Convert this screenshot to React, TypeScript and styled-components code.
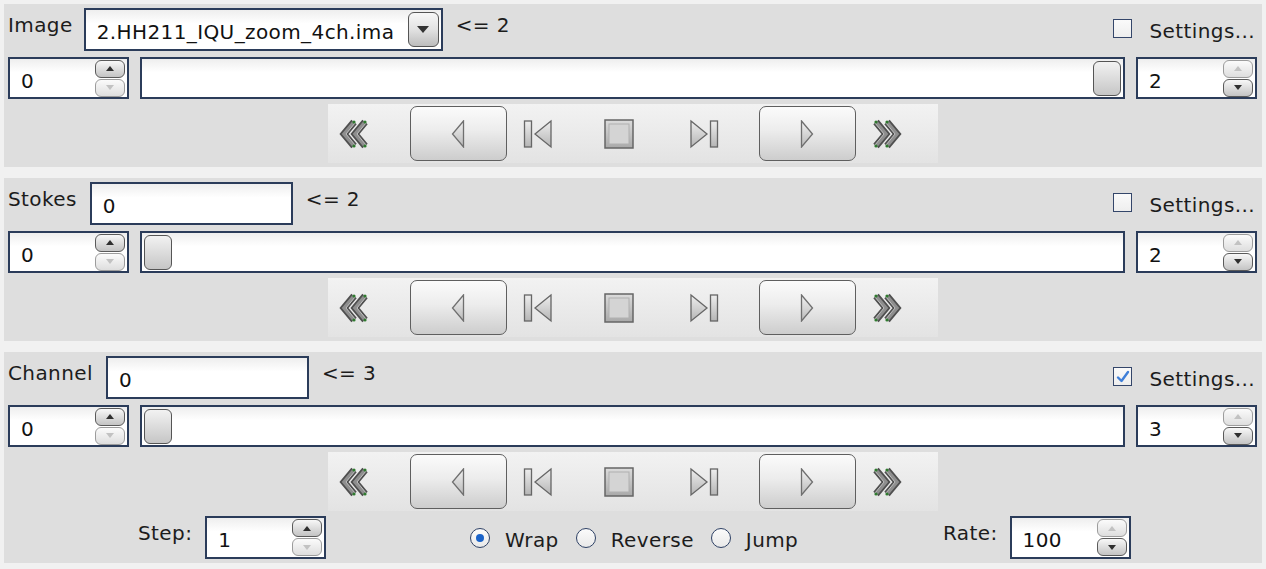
import React from "react";
import styled, { createGlobalStyle } from "styled-components";

const GlobalStyle = createGlobalStyle`
  body {
    margin: 0;
    background: #f1f1f1;
    font-family: "DejaVu Sans", "Liberation Sans", sans-serif;
    color: #1c1c1c;
  }
`;

const Page = styled.div`
  display: flex;
  flex-direction: column;
  gap: 11px;
  padding: 4px;
`;

const Panel = styled.section`
  background: #dedede;
  padding: 4px 5px 4px 4px;
  display: flex;
  flex-direction: column;
`;

const HeaderRow = styled.div`
  display: flex;
  align-items: flex-start;
  height: 43px;
`;

const Label = styled.span<{ $gap?: number }>`
  font-size: 20px;
  line-height: 24px;
  letter-spacing: 0.4px;
  margin-top: 5px;
  margin-right: ${(p) => p.$gap ?? 13}px;
  white-space: nowrap;
`;

const Hint = styled(Label)`
  margin-left: 13px;
`;

const Field = styled.div<{ $w: number; $h?: number }>`
  width: ${(p) => p.$w}px;
  height: ${(p) => p.$h ?? 43}px;
  box-sizing: border-box;
  border: 2px solid #2b3c5a;
  background: linear-gradient(#eeeeee, #ffffff 35%);
  display: flex;
  align-items: center;
  padding: 0 2px 0 11px;
  flex-shrink: 0;
`;

const FieldText = styled.span`
  flex: 1;
  min-width: 0;
  overflow: hidden;
  white-space: nowrap;
  font-size: 20px;
  line-height: 24px;
  letter-spacing: 0.4px;
  padding-top: 5px;
  color: #111;
`;

const ComboArrow = styled.span`
  width: 31px;
  height: 35px;
  box-sizing: border-box;
  margin-left: 4px;
  flex-shrink: 0;
  border: 1.5px solid #555;
  border-radius: 6px;
  background: linear-gradient(#f7f7f7, #e2e2e2 50%, #bdbdbd);
  display: flex;
  align-items: center;
  justify-content: center;
`;

const DownTriangle = styled.span<{ $color?: string; $size?: number }>`
  width: 0;
  height: 0;
  border-left: ${(p) => p.$size ?? 6}px solid transparent;
  border-right: ${(p) => p.$size ?? 6}px solid transparent;
  border-top: ${(p) => (p.$size ?? 6) + 1}px solid ${(p) => p.$color ?? "#333"};
`;

const UpTriangle = styled.span<{ $color?: string }>`
  width: 0;
  height: 0;
  border-left: 4px solid transparent;
  border-right: 4px solid transparent;
  border-bottom: 5px solid ${(p) => p.$color ?? "#333"};
`;

const SpinButtons = styled.div`
  display: flex;
  flex-direction: column;
  gap: 1px;
  margin-left: 4px;
`;

const SpinPill = styled.span<{ $disabled?: boolean }>`
  width: 30px;
  height: 18px;
  box-sizing: border-box;
  border: 1.5px solid ${(p) => (p.$disabled ? "#9c9c9c" : "#5a5a5a")};
  border-radius: 6px;
  background: ${(p) =>
    p.$disabled
      ? "linear-gradient(#fbfbfb, #dedede)"
      : "linear-gradient(#f8f8f8, #d8d8d8 60%, #c4c4c4)"};
  display: flex;
  align-items: center;
  justify-content: center;
`;

const SettingsGroup = styled.div`
  margin-left: auto;
  display: flex;
  align-items: flex-start;
  gap: 17px;
  padding-right: 2px;
`;

const CheckBox = styled.span`
  width: 19px;
  height: 19px;
  box-sizing: border-box;
  margin-top: 11px;
  border: 1.5px solid #34466a;
  background: linear-gradient(#fafafa, #eeeeee);
  display: flex;
  align-items: center;
  justify-content: center;
`;

const SettingsText = styled.span`
  font-size: 20px;
  line-height: 24px;
  letter-spacing: 0.4px;
  margin-top: 11px;
`;

const SliderRow = styled.div`
  display: flex;
  gap: 11px;
  margin-top: 6px;
  height: 42px;
`;

const Track = styled.div<{ $atEnd: boolean }>`
  flex: 1;
  box-sizing: border-box;
  border: 2px solid #2b3c5a;
  background: linear-gradient(#eeeeee, #ffffff 35%);
  display: flex;
  align-items: center;
  justify-content: ${(p) => (p.$atEnd ? "flex-end" : "flex-start")};
  padding: 0 2px;
`;

const Handle = styled.span`
  width: 28px;
  height: 35px;
  box-sizing: border-box;
  border: 1.5px solid #555;
  border-radius: 6px;
  background: linear-gradient(#f2f2f2, #dcdcdc 50%, #c6c6c6);
`;

const Toolbar = styled.div`
  align-self: center;
  width: 610px;
  height: 59px;
  margin-top: 5px;
  background: linear-gradient(#f2f2f2, #ececec 40%, #e3e3e3);
  display: flex;
  align-items: center;
`;

const ToolIcon = styled.span<{ $ml: number }>`
  display: flex;
  margin-left: ${(p) => p.$ml}px;
`;

const BigButton = styled.span<{ $ml: number }>`
  width: 97px;
  height: 55px;
  box-sizing: border-box;
  margin-left: ${(p) => p.$ml}px;
  border: 1.5px solid #5f5f5f;
  border-radius: 7px;
  background: linear-gradient(#fbfbfb, #ececec 45%, #cdcdcd);
  display: flex;
  align-items: center;
  justify-content: center;
`;

const Footer = styled.div`
  display: grid;
  grid-template-columns: 462px 473px 1fr;
  height: 43px;
  margin-top: 5px;
`;

const FooterGroup = styled.div<{ $pl?: number }>`
  display: flex;
  align-items: flex-start;
  padding-left: ${(p) => p.$pl ?? 0}px;
`;

const RadioGroup = styled.div`
  display: flex;
  align-items: center;
  gap: 17px;
  height: 43px;
`;

const RadioItem = styled.label`
  display: flex;
  align-items: center;
  gap: 15px;
`;

const RadioCircle = styled.span<{ $on?: boolean }>`
  width: 20px;
  height: 20px;
  box-sizing: border-box;
  border-radius: 50%;
  border: 1.5px solid #2e4165;
  background: linear-gradient(#fbfbfb, #e9e9e9);
  display: flex;
  align-items: center;
  justify-content: center;
  &::after {
    content: "";
    width: 8px;
    height: 8px;
    border-radius: 50%;
    background: ${(p) => (p.$on ? "#1a63c9" : "transparent")};
  }
`;

const RadioText = styled.span`
  font-size: 20px;
  line-height: 24px;
  letter-spacing: 0.4px;
  padding-top: 4px;
`;

const Chevrons: React.FC<{ flip?: boolean }> = ({ flip }) => (
  <svg width="34" height="32" viewBox="0 0 34 32" style={flip ? { transform: "scaleX(-1)" } : undefined}>
    {[0, 11].map((dx) => (
      <g key={dx} transform={`translate(${dx} 0)`}>
        <polyline points="15,4 5,16 15,28" fill="none" stroke="#4f4f4f" strokeWidth="7" strokeLinejoin="miter" />
        <polyline points="15,4 5,16 15,28" fill="none" stroke="#8e8e8e" strokeWidth="3.5" />
        <polyline points="16,5 7,16 16,27" fill="none" stroke="#bdbdbd" strokeWidth="1" />
        <circle cx="15" cy="4" r="1.6" fill="#2f7a2f" />
        <circle cx="15" cy="28" r="1.6" fill="#2f7a2f" />
      </g>
    ))}
  </svg>
);

const Tri: React.FC<{ flip?: boolean }> = ({ flip }) => (
  <svg width="14" height="28" viewBox="0 0 14 28" style={flip ? { transform: "scaleX(-1)" } : undefined}>
    <defs>
      <linearGradient id="triFill" x1="0" y1="0" x2="0" y2="1">
        <stop offset="0" stopColor="#f2f2f2" />
        <stop offset="1" stopColor="#b9b9b9" />
      </linearGradient>
    </defs>
    <polygon points="12.5,1 1.5,14 12.5,27" fill="url(#triFill)" stroke="#6f6f6f" strokeWidth="1.3" />
  </svg>
);

const StepIcon: React.FC<{ flip?: boolean }> = ({ flip }) => (
  <svg width="30" height="30" viewBox="0 0 30 30" style={flip ? { transform: "scaleX(-1)" } : undefined}>
    <defs>
      <linearGradient id="stepFill" x1="0" y1="0" x2="0" y2="1">
        <stop offset="0" stopColor="#eeeeee" />
        <stop offset="1" stopColor="#b5b5b5" />
      </linearGradient>
    </defs>
    <rect x="1.5" y="2" width="7" height="26" fill="url(#stepFill)" stroke="#666" strokeWidth="1.3" />
    <polygon points="28,2 12,15 28,28" fill="url(#stepFill)" stroke="#666" strokeWidth="1.3" />
  </svg>
);

const StopIcon: React.FC = () => (
  <svg width="30" height="30" viewBox="0 0 30 30">
    <defs>
      <linearGradient id="stopFill" x1="0" y1="0" x2="0" y2="1">
        <stop offset="0" stopColor="#dcdcdc" />
        <stop offset="1" stopColor="#a9a9a9" />
      </linearGradient>
    </defs>
    <rect x="1" y="1" width="28" height="28" fill="url(#stopFill)" stroke="#666" strokeWidth="1.5" />
    <rect x="5" y="5" width="20" height="20" fill="#d4d4d4" stroke="#b0b0b0" strokeWidth="1" />
  </svg>
);

type SpinProps = { value: string; atMax?: boolean; w?: number; h?: number };

const Spin: React.FC<SpinProps> = ({ value, atMax, w = 121, h = 42 }) => (
  <Field $w={w} $h={h}>
    <FieldText>{value}</FieldText>
    <SpinButtons>
      <SpinPill $disabled={atMax}>
        <UpTriangle $color={atMax ? "#c2c2c2" : "#2f2f2f"} />
      </SpinPill>
      <SpinPill $disabled={!atMax}>
        <DownTriangle $size={4} $color={!atMax ? "#c2c2c2" : "#2f2f2f"} />
      </SpinPill>
    </SpinButtons>
  </Field>
);

const Transport: React.FC = () => (
  <Toolbar>
    <ToolIcon $ml={11}>
      <Chevrons />
    </ToolIcon>
    <BigButton $ml={37}>
      <Tri />
    </BigButton>
    <ToolIcon $ml={16}>
      <StepIcon />
    </ToolIcon>
    <ToolIcon $ml={51}>
      <StopIcon />
    </ToolIcon>
    <ToolIcon $ml={55}>
      <StepIcon flip />
    </ToolIcon>
    <BigButton $ml={40}>
      <Tri flip />
    </BigButton>
    <ToolIcon $ml={12}>
      <Chevrons flip />
    </ToolIcon>
  </Toolbar>
);

type PanelData = {
  label: string;
  value: string;
  combo?: boolean;
  max: number;
  atEnd: boolean;
  checked: boolean;
  footer?: boolean;
};

const panels: PanelData[] = [
  { label: "Image", value: "2.HH211_IQU_zoom_4ch.ima", combo: true, max: 2, atEnd: true, checked: false },
  { label: "Stokes", value: "0", max: 2, atEnd: false, checked: false },
  { label: "Channel", value: "0", max: 3, atEnd: false, checked: true, footer: true },
];

const CheckMark = () => (
  <svg width="14" height="14" viewBox="0 0 14 14">
    <path d="M2 7.5 L5.5 11 L12 2" fill="none" stroke="#3f7fd8" strokeWidth="2.4" strokeLinecap="round" strokeLinejoin="round" />
  </svg>
);

const AnimatorPanel: React.FC<{ data: PanelData }> = ({ data }) => (
  <Panel>
    <HeaderRow>
      <Label $gap={data.combo ? 11 : 13}>{data.label}</Label>
      {data.combo ? (
        <Field $w={359}>
          <FieldText>{data.value}</FieldText>
          <ComboArrow>
            <DownTriangle />
          </ComboArrow>
        </Field>
      ) : (
        <Field $w={203}>
          <FieldText>{data.value}</FieldText>
        </Field>
      )}
      <Hint>{`<= ${data.max}`}</Hint>
      <SettingsGroup>
        <CheckBox>{data.checked && <CheckMark />}</CheckBox>
        <SettingsText>Settings...</SettingsText>
      </SettingsGroup>
    </HeaderRow>
    <SliderRow>
      <Spin value="0" />
      <Track $atEnd={data.atEnd}>
        <Handle />
      </Track>
      <Spin value={String(data.max)} atMax />
    </SliderRow>
    <Transport />
    {data.footer && (
      <Footer>
        <FooterGroup $pl={130}>
          <Label>Step:</Label>
          <Spin value="1" h={43} />
        </FooterGroup>
        <RadioGroup>
          <RadioItem>
            <RadioCircle $on />
            <RadioText>Wrap</RadioText>
          </RadioItem>
          <RadioItem>
            <RadioCircle />
            <RadioText>Reverse</RadioText>
          </RadioItem>
          <RadioItem>
            <RadioCircle />
            <RadioText>Jump</RadioText>
          </RadioItem>
        </RadioGroup>
        <FooterGroup>
          <Label $gap={12}>Rate:</Label>
          <Spin value="100" atMax h={43} />
        </FooterGroup>
      </Footer>
    )}
  </Panel>
);

const App: React.FC = () => (
  <>
    <GlobalStyle />
    <Page>
      {panels.map((p) => (
        <AnimatorPanel key={p.label} data={p} />
      ))}
    </Page>
  </>
);

export default App;
